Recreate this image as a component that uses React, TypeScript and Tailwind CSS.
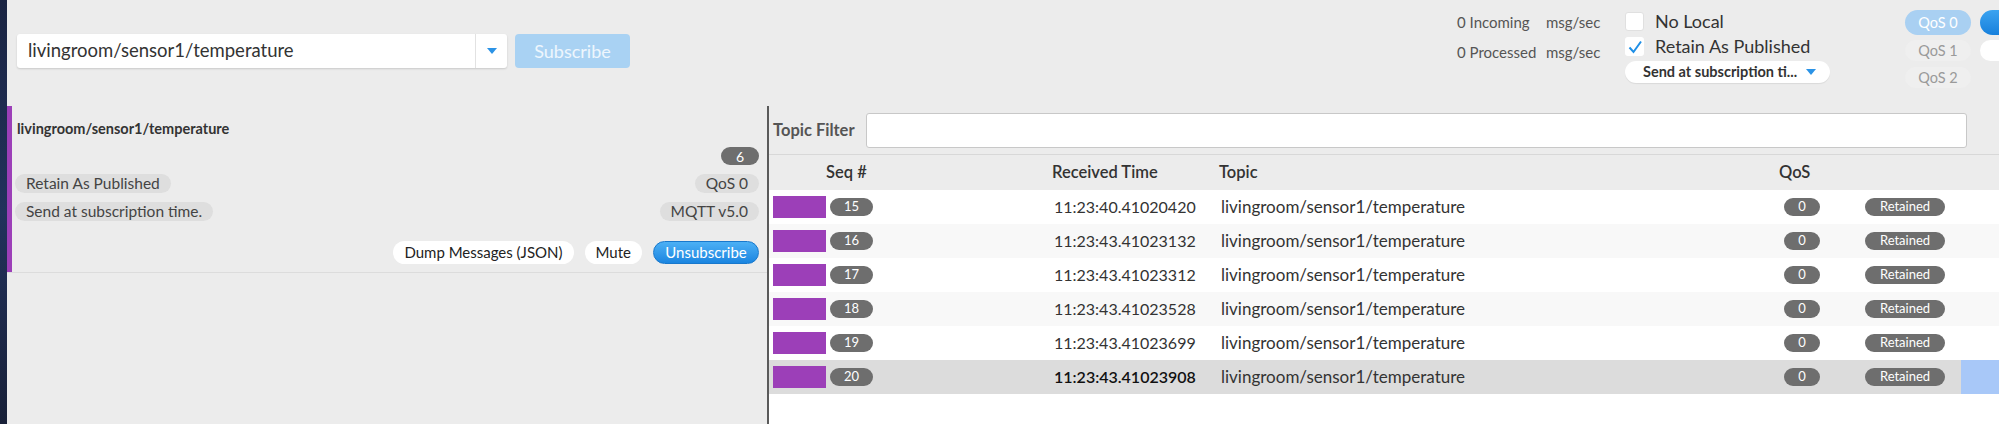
import React from "react";

const rows = [
  { seq: 15, time: "11:23:40.41020420" },
  { seq: 16, time: "11:23:43.41023132" },
  { seq: 17, time: "11:23:43.41023312" },
  { seq: 18, time: "11:23:43.41023528" },
  { seq: 19, time: "11:23:43.41023699" },
  { seq: 20, time: "11:23:43.41023908" },
];

function Caret() {
  return (
    <svg width="12" height="8" viewBox="0 0 12 8">
      <path d="M1 1 L11 1 L6 7 Z" fill="#2b93e6" />
    </svg>
  );
}

function TopBar() {
  return (
    <div className="flex h-[106px] w-[1992px] shrink-0 bg-[#ececec]">
      <div className="ml-[10px] mt-[34px] flex h-[34px] w-[490px] shrink-0 items-center rounded-[3px] bg-white shadow-[0_1px_2px_rgba(0,0,0,0.15)]">
        <div className="flex-1 pl-[11px] text-[18.5px] text-[#333]">livingroom/sensor1/temperature</div>
        <div className="flex h-full w-[32px] items-center justify-center border-l border-[#e2e2e2]">
          <Caret />
        </div>
      </div>
      <div className="ml-[8px] mt-[34px] flex h-[34px] w-[115px] shrink-0 items-center justify-center rounded-[4px] bg-[#a9d2f3] text-[18px] text-white/80">
        Subscribe
      </div>
      <div className="ml-[827px] mt-[13px] flex w-[143px] shrink-0 flex-col gap-[11px] text-[15px] text-[#555]">
        <div className="flex h-[19px] items-center whitespace-nowrap">
          <span className="w-[89px] shrink-0">0 Incoming</span>
          <span>msg/sec</span>
        </div>
        <div className="flex h-[19px] items-center whitespace-nowrap">
          <span className="w-[89px] shrink-0">0 Processed</span>
          <span>msg/sec</span>
        </div>
      </div>
      <div className="ml-[25px] mt-[12px] flex w-[205px] shrink-0 flex-col">
        <div className="flex h-[19px] items-center">
          <div className="h-[19px] w-[19px] rounded-[3px] border border-[#e0e0e0] bg-white" />
          <span className="ml-[11px] text-[18px] text-[#333]">No Local</span>
        </div>
        <div className="mt-[6px] flex h-[19px] items-center">
          <div className="flex h-[19px] w-[19px] items-center justify-center rounded-[3px] bg-white">
            <svg width="16" height="16" viewBox="0 0 16 16">
              <path d="M2.5 8.5 L6.5 13 L14 2.5" fill="none" stroke="#1f8fe6" strokeWidth="2" />
            </svg>
          </div>
          <span className="ml-[11px] text-[18px] text-[#333]">Retain As Published</span>
        </div>
        <div className="mt-[5px] flex h-[22px] items-center rounded-full bg-white pl-[18px] pr-[13px] shadow-[0_1px_1px_rgba(0,0,0,0.08)]">
          <span className="flex-1 whitespace-nowrap text-[14.5px] font-bold text-[#333]">Send at subscription ti...</span>
          <Caret />
        </div>
      </div>
      <div className="ml-[75px] mt-[10px] flex w-[66px] shrink-0 flex-col">
        <div className="flex h-[25px] items-center justify-center rounded-full bg-[#a9d0f2] text-[14.5px] text-white">QoS 0</div>
        <div className="mt-[5px] flex h-[21px] items-center justify-center rounded-full bg-[#efefef] text-[14.5px] text-[#9a9a9a]">QoS 1</div>
        <div className="mt-[6px] flex h-[21px] items-center justify-center rounded-full bg-[#efefef] text-[14.5px] text-[#9a9a9a]">QoS 2</div>
      </div>
      <div className="ml-[9px] mt-[10px] flex w-[19px] shrink-0 flex-col">
        <div className="h-[25px] rounded-l-full bg-gradient-to-b from-[#3aa3f0] to-[#1680dc]" />
        <div className="mt-[5px] h-[21px] rounded-l-full bg-white" />
      </div>
    </div>
  );
}

function Pill({ children }: { children: React.ReactNode }) {
  return (
    <div className="flex h-[19px] items-center rounded-full bg-[#dedede] px-[11px] text-[15.5px] text-[#444]">
      {children}
    </div>
  );
}

function LeftPanel() {
  return (
    <div className="flex w-[760px] shrink-0 flex-col bg-[#ececec]">
      <div className="flex border-b border-[#dcdcdc]">
        <div className="w-[5px] bg-[#9c3fb8]" />
        <div className="flex flex-1 flex-col pb-[8px] pl-[3px] pr-[8px] pt-[13px]">
          <div className="ml-[2px] h-[20px] text-[14.5px] font-bold leading-[20px] text-[#333]">
            livingroom/sensor1/temperature
          </div>
          <div className="mt-[8px] flex justify-end">
            <div className="flex h-[18px] w-[38px] items-center justify-center rounded-full bg-[#6e6e6e] text-[14px] text-white">
              6
            </div>
          </div>
          <div className="mt-[9px] flex justify-between">
            <Pill>Retain As Published</Pill>
            <Pill>QoS 0</Pill>
          </div>
          <div className="mt-[9px] flex justify-between">
            <Pill>Send at subscription time.</Pill>
            <Pill>MQTT v5.0</Pill>
          </div>
          <div className="mt-[20px] flex justify-end gap-[11px]">
            <div className="flex h-[23px] items-center rounded-full bg-white px-[11px] text-[15px] text-[#222]">
              Dump Messages (JSON)
            </div>
            <div className="flex h-[23px] items-center rounded-full bg-white px-[11px] text-[15px] text-[#222]">
              Mute
            </div>
            <div className="flex h-[23px] w-[106px] items-center justify-center rounded-full border border-[#1878cc] bg-gradient-to-b from-[#4bb0f5] to-[#1a85e0] text-[15px] text-white">
              Unsubscribe
            </div>
          </div>
        </div>
      </div>
    </div>
  );
}

function Badge({ children, w }: { children: React.ReactNode; w: string }) {
  return (
    <div className={`flex h-[18px] items-center justify-center rounded-full bg-[#6e6e6e] text-[13px] text-white ${w}`}>
      {children}
    </div>
  );
}

function RightPanel() {
  return (
    <div className="flex flex-1 flex-col border-l-2 border-[#5a5a5a] bg-white">
      <div className="flex h-[49px] items-center border-b border-[#d8d8d8] bg-[#ececec] pl-[4px]">
        <span className="w-[93px] text-[16.5px] font-bold text-[#555]">Topic Filter</span>
        <div className="h-[35px] w-[1101px] rounded-[3px] border border-[#c8c8c8] bg-white" />
      </div>
      <div className="flex h-[35px] items-center bg-[#ececec] text-[16.5px] font-semibold text-[#333]">
        <span className="ml-[57px] w-[226px]">Seq #</span>
        <span className="w-[167px]">Received Time</span>
        <span className="w-[560px]">Topic</span>
        <span>QoS</span>
      </div>
      {rows.map((r, i) => {
        const selected = i === 5;
        const bg = selected ? "bg-[#dcdcdc]" : i % 2 === 1 ? "bg-[#f8f8f8]" : "bg-white";
        return (
          <div key={r.seq} className={`flex h-[34px] items-center text-[16px] text-[#333] ${bg}`}>
            <div className="ml-[4px] h-[22px] w-[53px] bg-[#9c3fb8]" />
            <div className="ml-[4px]">
              <Badge w="w-[43px]">{r.seq}</Badge>
            </div>
            <div className="w-[181px]" />
            <div className={`w-[167px] ${selected ? "font-semibold text-[#111]" : ""}`}>{r.time}</div>
            <div className="w-[563px] text-[17px]">livingroom/sensor1/temperature</div>
            <div className="w-[81px]">
              <Badge w="w-[36px]">0</Badge>
            </div>
            <div className="w-[80px]">
              <Badge w="w-[80px]">Retained</Badge>
            </div>
            <div className="w-[16px]" />
            <div className={`h-full flex-1 ${selected ? "bg-[#a8c8f8]" : ""}`} />
          </div>
        );
      })}
    </div>
  );
}

export default function App() {
  return (
    <div className="flex h-[424px] w-[1999px] overflow-hidden font-['Lato',sans-serif]">
      <div className="w-[7px] shrink-0 bg-gradient-to-b from-[#1a2442] via-[#22325c] to-[#182038]" />
      <div className="flex min-w-0 flex-1 flex-col overflow-hidden">
        <TopBar />
        <div className="flex flex-1">
          <LeftPanel />
          <RightPanel />
        </div>
      </div>
    </div>
  );
}
